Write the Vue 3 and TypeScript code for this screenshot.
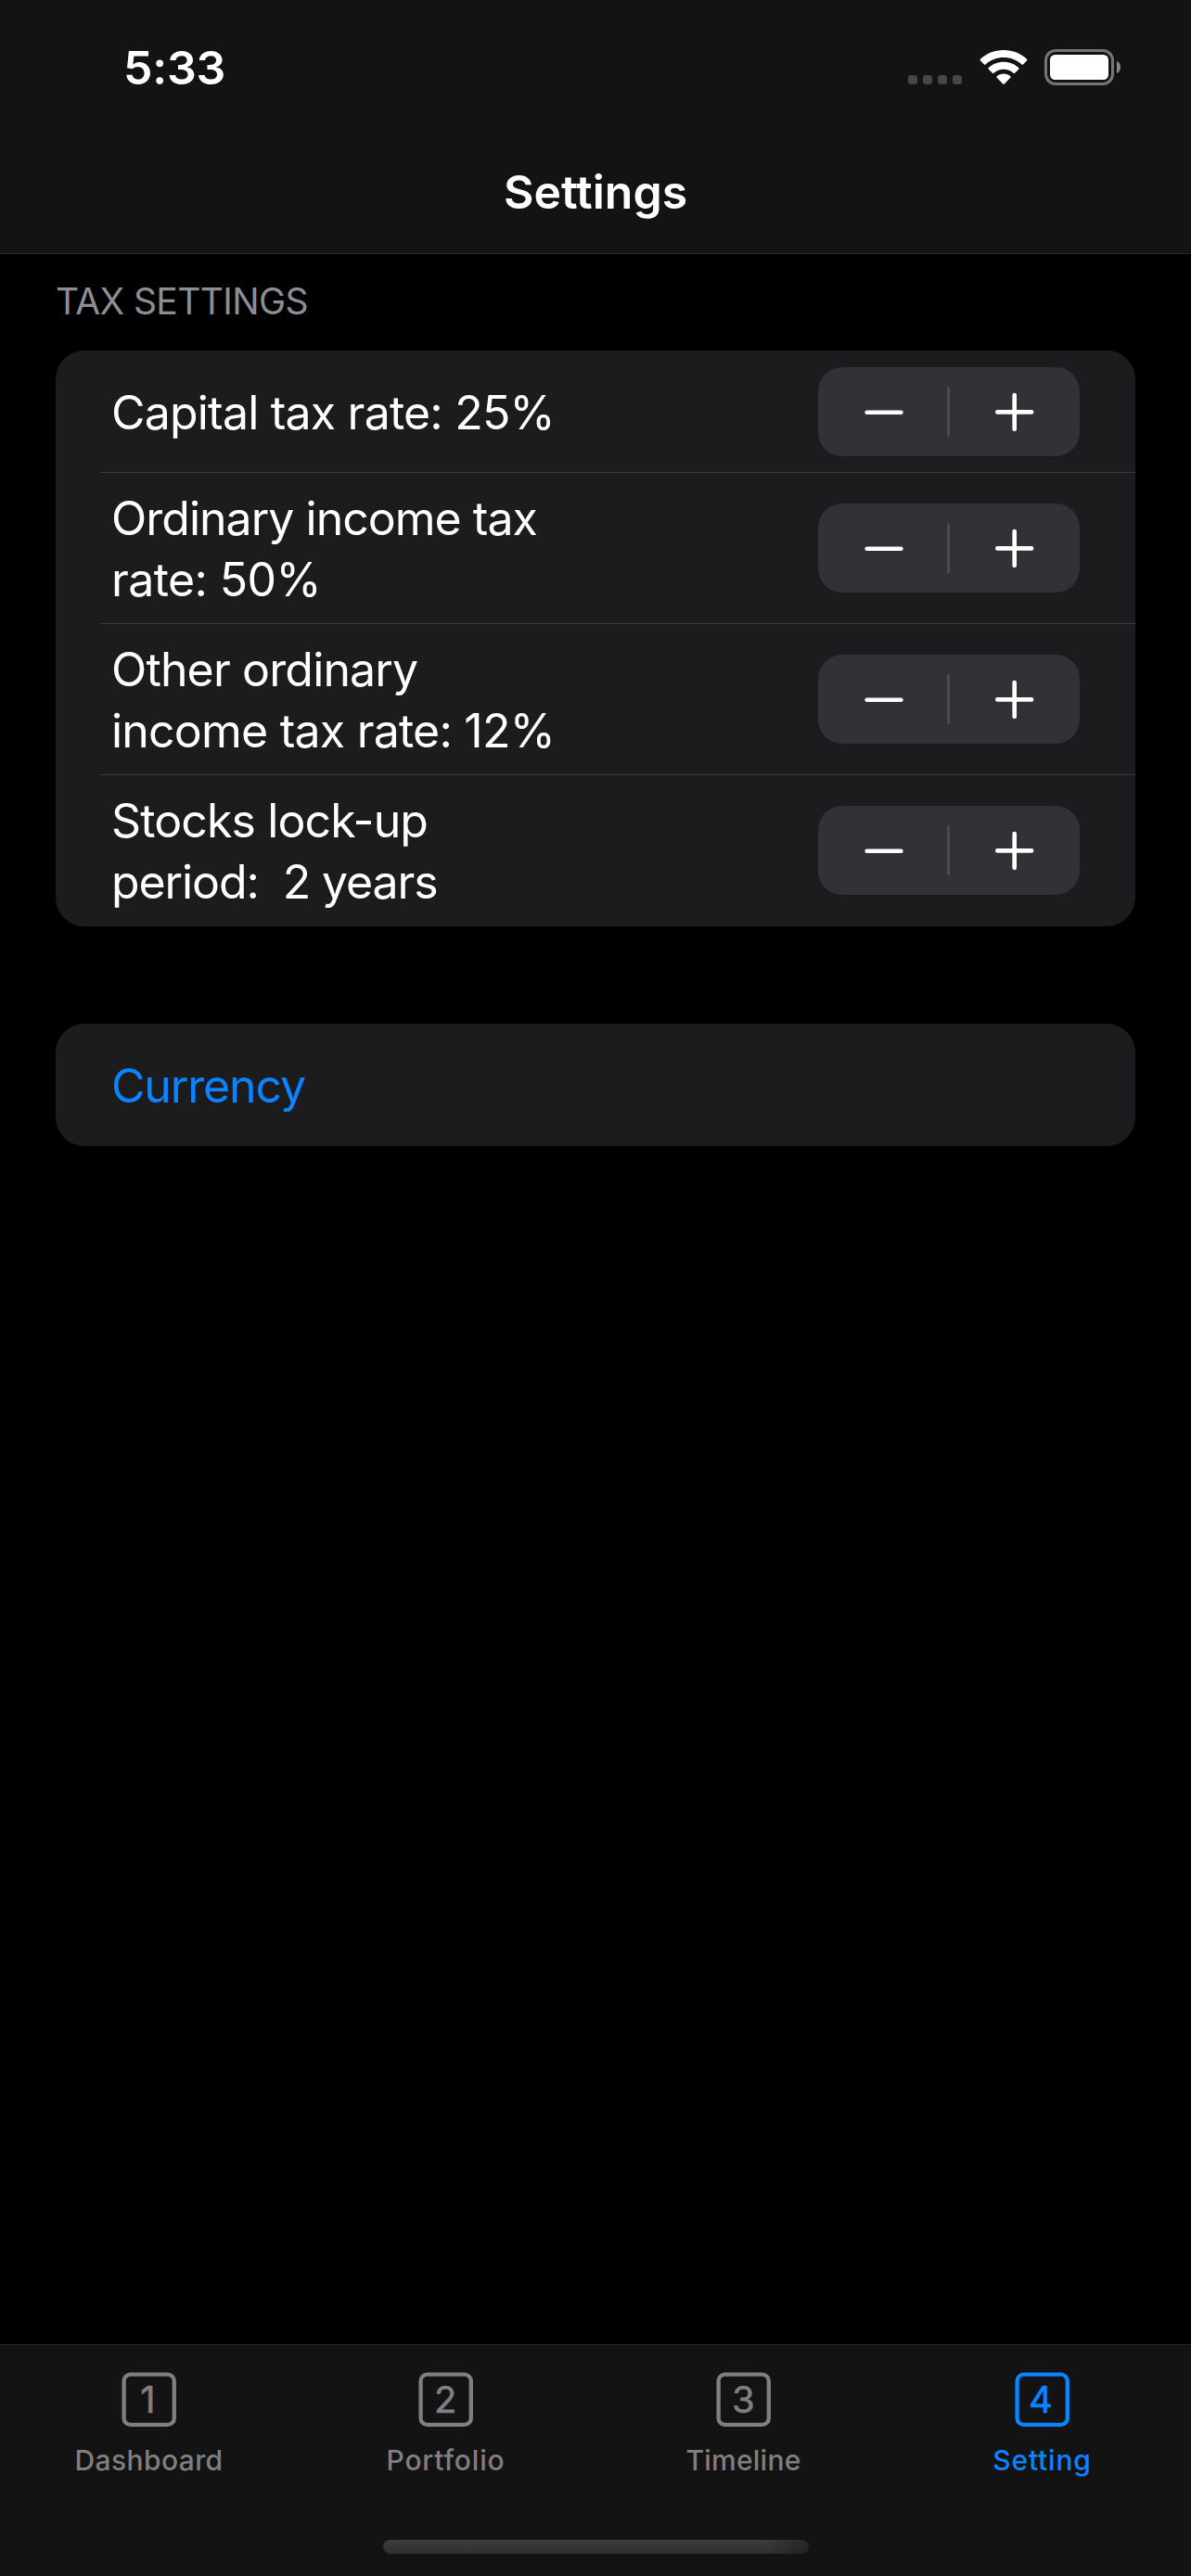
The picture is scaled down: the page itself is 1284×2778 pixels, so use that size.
<script setup lang="ts">
import { computed, ref } from 'vue'

interface Line {
  text: string
  tracking: number
}

interface Setting {
  id: string
  value: number
  step: number
  lines: (value: number) => Line[]
}

interface Tab {
  id: number
  label: string
  tracking: number
  digitX: number
}

const settings = ref<Setting[]>([
  {
    id: 'capital',
    value: 25,
    step: 1,
    lines: (v) => [{ text: `Capital tax rate: ${v}%`, tracking: -0.8 }],
  },
  {
    id: 'ordinary',
    value: 50,
    step: 1,
    lines: (v) => [
      { text: 'Ordinary income tax', tracking: -0.98 },
      { text: `rate: ${v}%`, tracking: -0.6 },
    ],
  },
  {
    id: 'other',
    value: 12,
    step: 1,
    lines: (v) => [
      { text: 'Other ordinary', tracking: -0.85 },
      { text: `income tax rate: ${v}%`, tracking: -0.78 },
    ],
  },
  {
    id: 'lockup',
    value: 2,
    step: 1,
    lines: (v) => [
      { text: 'Stocks lock-up', tracking: -0.88 },
      { text: `period:  ${v} years`, tracking: -1.1 },
    ],
  },
])

const rows = computed(() => settings.value.map((s) => ({ setting: s, lines: s.lines(s.value) })))

const tabs: Tab[] = [
  { id: 1, label: 'Dashboard', tracking: 0.4, digitX: 20.2 },
  { id: 2, label: 'Portfolio', tracking: 0.8, digitX: 17 },
  { id: 3, label: 'Timeline', tracking: 0.23, digitX: 17 },
  { id: 4, label: 'Setting', tracking: 0.8, digitX: 14.9 },
]
const activeTab = ref(4)

function change(s: Setting, direction: number) {
  s.value = Math.max(0, s.value + direction * s.step)
}
</script>

<template>
  <div class="screen">
    <header class="top">
      <div class="status">
        <span class="time">5:33</span>
        <div class="indicators">
          <svg class="dots" width="58" height="10" viewBox="0 0 58 10">
            <rect v-for="n in 4" :key="n" :x="(n - 1) * 16" y="0" width="10" height="10" rx="3.2" />
          </svg>
          <svg class="wifi" width="52" height="38" viewBox="0 0 52 38">
            <path d="M26 0C35.8 0 44.700 3.700 51.100 9.700Q51.800 10.500 51.100 11.300L47 15.400Q46.300 16 45.500 15.400C40.200 10.600 33.500 8 26 8S11.800 10.600 6.500 15.400Q5.700 16 5 15.400L0.900 11.300Q0.200 10.500 0.900 9.700C7.300 3.700 16.200 0 26 0Z" />
            <path d="M26 12.800C32.300 12.800 38 15.200 42.200 19.100Q42.900 19.900 42.200 20.700L38.100 24.700Q37.300 25.300 36.500 24.700C33.700 22.200 30 20.700 26 20.700S18.300 22.200 15.500 24.700Q14.700 25.300 13.900 24.700L9.800 20.700Q9.100 19.900 9.800 19.100C14 15.200 19.700 12.800 26 12.800Z" />
            <path d="M26 25.600C28.800 25.600 31.300 26.600 33.300 28.200Q34 29 33.300 29.800L26.800 36.500Q26 37.200 25.200 36.500L18.700 29.800Q18 29 18.700 28.200C20.700 26.600 23.200 25.600 26 25.600Z" />
          </svg>
          <svg class="battery" width="82" height="39" viewBox="0 0 82 39">
            <rect class="shell" x="1.500" y="1.500" width="72" height="36" rx="10.500" />
            <rect class="charge" x="6" y="6" width="63" height="27" rx="5.500" />
            <path class="cap" d="M78 13C80.600 14.100 82 16.600 82 19.500S80.600 24.900 78 26Z" />
          </svg>
        </div>
      </div>
      <h1 class="title">Settings</h1>
    </header>

    <main class="content">
      <h2 class="section">TAX SETTINGS</h2>
      <section class="card">
        <div
          v-for="row in rows"
          :key="row.setting.id"
          class="row"
          :class="{ single: row.lines.length === 1 }"
        >
          <div class="label">
            <span
              v-for="line in row.lines"
              :key="line.text"
              class="line"
              :style="{ letterSpacing: line.tracking + 'px' }"
            >{{ line.text }}</span>
          </div>
          <div class="stepper">
            <button class="step minus" aria-label="Decrease" @click="change(row.setting, -1)">
              <svg width="42" height="42" viewBox="0 0 42 42">
                <path d="M2.600 21.700H39.400" />
              </svg>
            </button>
            <span class="bar"></span>
            <button class="step" aria-label="Increase" @click="change(row.setting, 1)">
              <svg width="42" height="42" viewBox="0 0 42 42">
                <path d="M2.300 21.400H39.100M20.700 3V39.800" />
              </svg>
            </button>
          </div>
        </div>
      </section>

      <section class="card second">
        <a class="currency">Currency</a>
      </section>
    </main>

    <nav class="tabs">
      <div class="tab-row">
        <button
          v-for="tab in tabs"
          :key="tab.id"
          class="tab"
          :class="{ active: tab.id === activeTab }"
          @click="activeTab = tab.id"
        >
          <svg class="tab-icon" width="60" height="60" viewBox="0 0 60 60">
            <rect x="2.600" y="2.700" width="54.200" height="54.200" rx="7" />
            <text :x="tab.digitX" y="44">{{ tab.id }}</text>
          </svg>
          <span class="tab-label" :style="{ letterSpacing: tab.tracking + 'px' }">{{ tab.label }}</span>
        </button>
      </div>
      <div class="home"></div>
    </nav>
  </div>
</template>

<style>
html,
body {
  margin: 0;
  background: #000;
}
</style>

<style scoped>
.screen {
  display: flex;
  flex-direction: column;
  width: 1284px;
  height: 2778px;
  overflow: hidden;
  background: #000;
  color: #fff;
  font-family: Inter, 'Liberation Sans', sans-serif;
}

button {
  margin: 0;
  padding: 0;
  border: 0;
  background: none;
  color: inherit;
  font: inherit;
}

.top {
  box-sizing: border-box;
  flex: none;
  height: 274px;
  background: #131313;
  border-bottom: 1px solid #2a2a2b;
}

.status {
  display: flex;
  justify-content: space-between;
  height: 141px;
  padding: 0 76px 0 133px;
}

.time {
  margin-top: 43px;
  font-size: 50px;
  font-weight: 600;
  line-height: 60px;
  letter-spacing: -0.2px;
}

.indicators {
  display: flex;
  align-items: flex-start;
}

.dots {
  margin: 81px 19px 0 0;
  fill: #464646;
}

.wifi {
  margin: 54px 18px 0 0;
  fill: #fff;
}

.battery {
  margin-top: 53px;
}

.shell {
  fill: none;
  stroke: #757575;
  stroke-width: 3;
}

.charge {
  fill: #fff;
}

.cap {
  fill: #8a8a8a;
}

.title {
  margin: 0;
  padding-top: 36px;
  font-size: 50px;
  font-weight: 600;
  line-height: 60px;
  text-align: center;
}

.content {
  flex: 1;
  padding: 0 60px;
}

.section {
  margin: 0;
  padding: 27px 0 30px;
  font-size: 39px;
  font-weight: 400;
  line-height: 47px;
  letter-spacing: -0.6px;
  color: #8d8d93;
}

.card {
  overflow: hidden;
  border-radius: 31px;
  background: #1c1c1e;
}

.card.second {
  margin-top: 105px;
}

.row {
  box-sizing: border-box;
  display: flex;
  align-items: flex-start;
  justify-content: space-between;
  height: 163px;
  padding: 0 60px;
  background: linear-gradient(#3d3d40, #3d3d40) 48px 100% / 100% 1px no-repeat;
}

.row.single {
  height: 132px;
}

.row:last-child {
  background: none;
}

.label {
  display: flex;
  flex-direction: column;
  padding-top: 16px;
}

.single .label {
  padding-top: 34px;
}

.line {
  font-size: 50px;
  line-height: 66px;
  white-space: pre;
}

.stepper {
  display: flex;
  align-items: center;
  width: 282px;
  height: 96px;
  margin-top: 33px;
  border-radius: 26px;
  background: #323236;
}

.single .stepper {
  margin-top: 18px;
}

.step {
  display: flex;
  flex: 1;
  align-items: center;
  justify-content: center;
  height: 96px;
}

.step.minus {
  flex: 0 0 139px;
}

.step svg {
  fill: none;
  stroke: #fff;
  stroke-width: 4.6;
  stroke-linecap: round;
}

.minus svg {
  margin-left: 2px;
}

.bar {
  width: 3px;
  height: 54px;
  border-radius: 1.5px;
  background: #4a4a4f;
}

.currency {
  display: block;
  height: 66px;
  padding: 34px 60px 32px;
  font-size: 50px;
  line-height: 66px;
  letter-spacing: -1.15px;
  color: #0a84ff;
}

.tabs {
  box-sizing: border-box;
  display: flex;
  flex: none;
  flex-direction: column;
  align-items: center;
  justify-content: space-between;
  height: 250px;
  padding-bottom: 24px;
  background: #131313;
  border-top: 1px solid #2a2a2b;
}

.tab-row {
  display: grid;
  grid-template-columns: 321px 319px 323px 321px;
}

.tab {
  display: flex;
  flex-direction: column;
  align-items: center;
  padding-top: 29px;
  color: #7f7f7f;
}

.tab.active {
  color: #0a84ff;
}

.tab-icon rect {
  fill: none;
  stroke: currentColor;
  stroke-width: 4.3;
}

.tab-icon text {
  fill: currentColor;
  stroke: currentColor;
  stroke-width: 0.6;
  stroke-linejoin: round;
  font-family: Inter, 'Liberation Sans', sans-serif;
  font-size: 40px;
}

.tab-label {
  margin-top: 17px;
  font-size: 30px;
  font-weight: 500;
  line-height: 36px;
}

.home {
  width: 459px;
  height: 15px;
  border-radius: 7.5px;
  background:
    linear-gradient(90deg, transparent 90%, rgba(30, 30, 30, 0.7)),
    linear-gradient(#3d3d3d, #2f2f2f);
}
</style>
